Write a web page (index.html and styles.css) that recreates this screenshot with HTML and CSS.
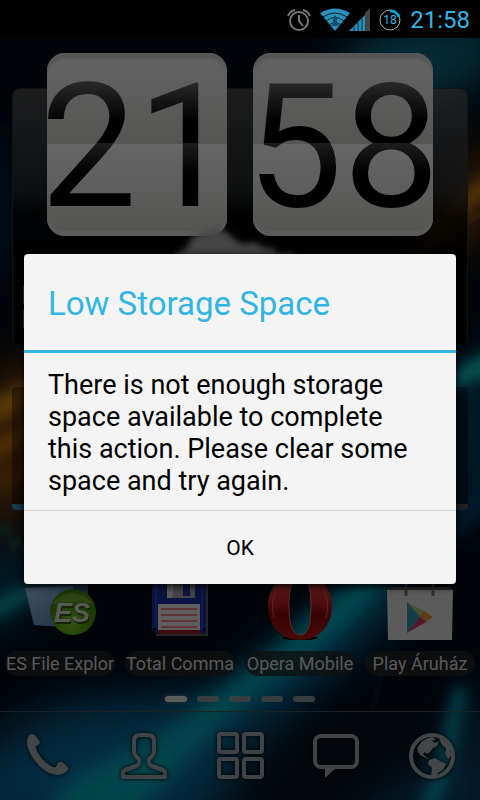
FILE: index.html
```html
<!DOCTYPE html>
<html lang="en">
<head>
  <meta charset="UTF-8">
  <meta name="viewport" content="width=device-width, initial-scale=1">
  <title>Low Storage Space</title>
  <link rel="stylesheet" href="styles.css">
</head>
<body>
  <div class="screen">
    <svg class="wallpaper" viewBox="0 0 480 800" preserveAspectRatio="xMidYMid slice" aria-hidden="true">
      <defs>
        <filter id="soft" x="-50%" y="-50%" width="200%" height="200%"><feGaussianBlur stdDeviation="7"/></filter>
        <filter id="beam" x="-50%" y="-50%" width="200%" height="200%"><feGaussianBlur stdDeviation="11"/></filter>
        <filter id="wide" x="-50%" y="-50%" width="200%" height="200%"><feGaussianBlur stdDeviation="22"/></filter>
        <filter id="thin" x="-50%" y="-50%" width="200%" height="200%"><feGaussianBlur stdDeviation="2"/></filter>
      </defs>
      <rect width="480" height="800" fill="#000a14"/>
      <g filter="url(#wide)">
        <path d="M320 90 L380 20 L500 20 L500 70 L400 120 Z" fill="#107088"/>
        <path d="M-30 120 L40 180 L20 270 L-30 280 Z" fill="#002038"/>
        <path d="M-30 390 L70 340 L90 470 L-30 540 Z" fill="#7a440c"/>
        <path d="M500 130 L400 230 L420 270 L500 220 Z" fill="#7a4408"/>
        <path d="M-30 830 L-30 760 L60 705 L220 690 L390 570 L410 600 L260 735 L200 830 Z" fill="#0070a8"/>
        <path d="M500 340 L440 370 L440 540 L500 480 Z" fill="#004868"/>
        <path d="M340 830 L440 760 L480 660 L500 830 Z" fill="#004a70"/>
        <path d="M-20 560 L40 540 L30 620 L-20 640 Z" fill="#00506a"/>
      </g>
      <path filter="url(#beam)" d="M40 820 L70 780 L170 730 L270 655 L330 600 L365 575 L395 578 L330 640 L240 705 L190 755 L130 820 Z" fill="#00c0d0"/>
      <g filter="url(#soft)">
        <path d="M418 810 L438 755 L456 685 L466 690 L456 755 L438 810 Z" fill="#00a8c8"/>
        <path d="M500 345 L450 372 L440 392 L500 372 Z" fill="#18c8d0"/>
        <path d="M-10 602 L60 572 L60 582 L-10 622 Z" fill="#10aab4"/>
        <path d="M-10 402 L50 370 L100 352 L100 368 L40 402 L-10 424 Z" fill="#e09018"/>
        <path d="M-10 444 L40 418 L40 434 L-10 462 Z" fill="#c87810"/>
        <path d="M-10 482 L40 458 L40 466 L-10 492 Z" fill="#a06018"/>
        <path d="M500 165 L465 192 L420 238 L432 238 L500 184 Z" fill="#d08018"/>
        <path d="M490 465 L460 500 L430 560 L500 500 Z" fill="#003c64"/>
      </g>
      <g filter="url(#thin)" fill="none" stroke-width="3">
        <path d="M500 202 L410 256" stroke="#8a5818"/>
        <path d="M-5 520 l8 14 l4 -10 l6 26 l5 -12 l6 14" stroke="#1c5038"/>
        <path d="M0 725 L45 695 M10 770 Q90 705 200 706" stroke="#006088" stroke-width="1"/>
        <path d="M370 800 L460 770 M372 710 L392 640" stroke="#003858" stroke-width="2"/>
      </g>
    </svg>

    <header class="status-bar">
      <svg width="24" height="26" viewBox="0 0 24 26" role="img" aria-label="Alarm set">
        <g fill="none" stroke="#777" stroke-width="2">
          <circle cx="12" cy="14" r="9"/>
          <path d="M12 8v6l4 5M1 9Q3 4 8 3M23 9Q21 4 16 3"/>
        </g>
      </svg>
      <svg width="50" height="24" viewBox="0 0 50 24" role="img" aria-label="Wi-Fi and mobile signal">
        <path d="M0 5Q15-4 30 5L15 23Z" fill="#2b90bb"/>
        <path d="M3 9Q15 1 27 9M6 13Q15 6 24 13M9 17Q15 12 21 17" fill="none" stroke="#04202c" stroke-width="1"/>
        <path d="M13 10l2-3l2 3v5l2 3h-8l2-3z" fill="#10506c"/>
        <path d="M29 23L45 7V23Z" fill="#2b90bb"/>
        <path d="M45 5L50 0V23H45Z" fill="#444"/>
        <path d="M34 17v6M38 14v9M42 10v13" stroke="#0a3040" stroke-width="1"/>
      </svg>
      <svg width="22" height="22" viewBox="0 0 22 22" role="img" aria-label="Battery 18 percent">
        <circle cx="11" cy="11" r="10" fill="none" stroke="#aaa" stroke-width="1"/>
        <path d="M11 2A9 9 0 0 1 20 8" fill="none" stroke="#0f9bd0" stroke-width="3"/>
        <text class="battery-text" x="11" y="15" text-anchor="middle">18</text>
      </svg>
      <time class="status-time">21:58</time>
    </header>

    <main class="home">
      <section class="clock-widget" aria-label="Clock and weather">
        <div class="flip-clock">
          <div class="flip"><span class="digits">21</span></div>
          <div class="flip"><span class="digits">58</span></div>
        </div>
        <svg class="cloud" width="150" height="46" viewBox="0 0 150 46" aria-hidden="true">
          <defs><filter id="puff"><feGaussianBlur stdDeviation="3"/></filter></defs>
          <path filter="url(#puff)" d="M6 46Q8 32 22 29Q24 14 42 12Q54 4 66 16Q74 24 80 24Q92 20 98 28Q108 26 112 34Q128 32 134 38L112 46Z" fill="#aaa"/>
        </svg>
        <div class="forecast"><i></i><i></i></div>
      </section>

      <section class="feed-widget" aria-label="Feed"></section>

      <nav class="apps" aria-label="Apps">
        <a class="app" href="#es">
          <svg width="72" height="72" viewBox="0 0 72 72" aria-hidden="true">
            <defs>
              <linearGradient id="folder" x2="1" y2="1"><stop offset="0" stop-color="#a8c8e8"/><stop offset="1" stop-color="#3c78b8"/></linearGradient>
              <radialGradient id="ball" cx=".45" cy=".75"><stop offset="0" stop-color="#78d020"/><stop offset="1" stop-color="#4c8c10"/></radialGradient>
            </defs>
            <path d="M12 8h52v50H18z" fill="#38668c"/>
            <path d="M1 20L49 18L56 60L10 57Z" fill="url(#folder)"/>
            <circle cx="49" cy="44" r="23" fill="url(#ball)"/>
            <path d="M28 36Q48 14 70 36Q48 32 28 36" fill="#a0c858" opacity=".5"/>
            <text class="es-mark" x="48" y="54" text-anchor="middle">ES</text>
          </svg>
          <span class="app-name">ES File Explor</span>
        </a>
        <a class="app" href="#total">
          <svg width="72" height="72" viewBox="0 0 72 72" aria-hidden="true">
            <path d="M12 10H64V68H12Z" fill="#605c58"/>
            <path d="M8 10H62V66H12L8 62Z" fill="#1832a8"/>
            <path d="M12 10V62M58 10V62" stroke="#3858d0" stroke-width="1"/>
            <path d="M23 8H51V30H23Z" fill="#aaa"/>
            <path d="M23 8H31L28 30H23Z" fill="#e0e0e0"/>
            <path d="M39 8H46V28H39Z" fill="#1832a8"/>
            <path d="M14 36H56V63H14Z" fill="#f0ece8"/>
            <path d="M17 41H53M17 47H53M17 53H53M17 59H53" stroke="#e02020" stroke-width="1"/>
            <path d="M14 62H56V66H14Z" fill="#9c2020"/>
            <path d="M9 60h3v3H9zM59 60h3v3h-3z" fill="#000830"/>
          </svg>
          <span class="app-name">Total Comma</span>
        </a>
        <a class="app" href="#opera">
          <svg width="72" height="72" viewBox="0 0 72 72" aria-hidden="true">
            <defs><linearGradient id="opera" x2="0" y2="1"><stop offset="0" stop-color="#f05050"/><stop offset=".45" stop-color="#c02020"/><stop offset=".6" stop-color="#8c0808"/><stop offset="1" stop-color="#b81818"/></linearGradient></defs>
            <ellipse cx="36" cy="70" rx="18" ry="2" fill="#000"/>
            <path fill-rule="evenodd" fill="url(#opera)" d="M36 6C56 6 68 20 68 38S56 72 36 72S4 56 4 38S16 6 36 6ZM36 11C27 11 25 24 25 38S27 67 36 67S47 54 47 38S45 11 36 11Z"/>
            <path d="M36 11C27 11 25 24 25 38S27 67 36 67S47 54 47 38S45 11 36 11Z" fill="none" stroke="#e07860" stroke-width="1"/>
            <path d="M12 22Q6 34 10 50M60 22Q66 34 62 50" fill="none" stroke="#d86060" stroke-width="1"/>
          </svg>
          <span class="app-name">Opera Mobile</span>
        </a>
        <a class="app" href="#play">
          <svg width="72" height="72" viewBox="0 0 72 72" aria-hidden="true">
            <path d="M3 22L7 19H65L69 22Z" fill="#606060"/>
            <path d="M3 22H69L68 72H4Z" fill="#e4e4e4"/>
            <path d="M22 28V14Q22 8 27 8H44Q49 8 49 14V28" fill="none" stroke="#777" stroke-width="3"/>
            <path d="M23 34V65L40 49Z" fill="#3c98b8"/>
            <path d="M23 34L42 44L37 50Z" fill="#b4c870"/>
            <path d="M40 43L49 49L41 54L36 49Z" fill="#e8983c"/>
            <path d="M23 65L36 49L42 54Z" fill="#d03c60"/>
          </svg>
          <span class="app-name">Play Áruház</span>
        </a>
      </nav>

      <div class="pages" aria-hidden="true">
        <span class="page current"></span>
        <span class="page"></span>
        <span class="page"></span>
        <span class="page"></span>
        <span class="page"></span>
      </div>
    </main>

    <nav class="dock" aria-label="Dock">
      <a href="#phone" aria-label="Phone">
        <svg width="48" height="48" viewBox="0 0 48 48">
          <path d="M5 3Q8 1 11 3L16 10Q16 12 12 14Q11 16 14 21Q20 31 29 35Q32 36 33 33Q34 29 38 30L43 34Q45 37 43 39Q39 43 32 43Q20 41 11 29Q3 18 3 11Q3 6 5 3Z"/>
        </svg>
      </a>
      <a href="#contacts" aria-label="Contacts">
        <svg class="line" width="48" height="48" viewBox="0 0 48 48">
          <path d="M20 3H28Q34 3 34 9V20Q34 23 29 27V30Q29 33 32 34L43 38Q45 39 45 41V45H3V41Q3 39 5 38L16 34Q19 33 19 30V27Q14 23 14 20V9Q14 3 20 3Z"/>
        </svg>
      </a>
      <a href="#all" aria-label="All apps">
        <svg class="line" width="48" height="48" viewBox="0 0 48 48">
          <rect x="3" y="2" width="18" height="18" rx="2"/>
          <rect x="28" y="2" width="18" height="18" rx="2"/>
          <rect x="3" y="27" width="18" height="18" rx="2"/>
          <rect x="28" y="27" width="18" height="18" rx="2"/>
        </svg>
      </a>
      <a href="#messages" aria-label="Messages">
        <svg class="line" width="48" height="48" viewBox="0 0 48 48">
          <rect x="3" y="4" width="42" height="31" rx="6"/>
          <path class="solid" d="M13 36H24L13 46Z"/>
        </svg>
      </a>
      <a href="#browser" aria-label="Browser">
        <svg width="48" height="48" viewBox="0 0 48 48">
          <circle class="ring" cx="24" cy="24" r="21"/>
          <path d="M9 16L14 9L20 6L24 5L28 7L24 9L27 11L31 9L29 14L25 16L22 20L19 22L17 20L15 22L18 25L21 28L16 25L12 23L10 20Z"/>
          <path d="M21 28L27 26L34 30L38 32L35 38L30 41L26 46L23 44L24 36L20 32Z"/>
          <path d="M33 7L38 10L42 16L43 24L40 27L37 22L38 16L34 13L31 7Z"/>
        </svg>
      </a>
    </nav>

    <div class="overlay">
      <div class="dialog" role="alertdialog" aria-labelledby="dialogTitle" aria-describedby="dialogText">
        <h1 id="dialogTitle">Low Storage Space</h1>
        <p id="dialogText">There is not enough storage space available to complete this action. Please clear some space and try again.</p>
        <button type="button">OK</button>
      </div>
    </div>
  </div>
</body>
</html>
```

FILE: styles.css
```css
* {
  box-sizing: border-box;
}
body {
  font-family: Roboto, Arial, sans-serif;
  background: #000;
  margin: 0;
}
.screen {
  position: relative;
  display: flex;
  flex-direction: column;
  min-height: 100vh;
  overflow: hidden;
  isolation: isolate;
}
.wallpaper {
  position: absolute;
  inset: 0;
  width: 100%;
  height: 100%;
  z-index: -1;
}

/* status bar */
.status-bar {
  display: flex;
  align-items: center;
  justify-content: flex-end;
  gap: 9px;
  height: 38px;
  padding: 2px 10px 0;
  background: #000;
}
.status-time {
  color: #33b5e5;
  font-size: 24px;
  line-height: 36px;
}
.battery-text {
  font-size: 12px;
  fill: #33b5e5;
}

/* home screen */
.home {
  flex: 1;
  display: flex;
  flex-direction: column;
}
.clock-widget {
  height: 256px;
  margin: 50px 12px 0;
  border: 1px solid #333;
  border-bottom-color: #000;
  border-radius: 8px;
  background: linear-gradient(rgba(90, 90, 90, 0.8), rgba(40, 44, 48, 0.8) 40%, rgba(0, 0, 0, 0.8) 50%, rgba(0, 0, 0, 0.9));
}
.flip-clock {
  display: flex;
  justify-content: center;
  gap: 26px;
  margin-top: -36px;
}
.flip {
  display: flex;
  justify-content: center;
  width: 180px;
  height: 183px;
  border-radius: 18px;
  background: linear-gradient(#f8f8f8, #d4d4d0 50%, #fff 50%, #d0d0cc);
  box-shadow: inset 0 7px 2px -1px #d8d8d8, inset 0 -6px 1px -1px #e4e4e4;
}
.digits {
  font-size: 172px;
  line-height: 188px;
  color: transparent;
  background: linear-gradient(#808080 10%, #000 38%, #000 49%, #484848 49%, #000 66%);
  -webkit-background-clip: text;
  background-clip: text;
}
.cloud {
  display: block;
  margin: -16px auto 0;
}
.forecast {
  display: flex;
  flex-direction: column;
  gap: 6px;
  padding: 20px 10px;
}
.forecast i {
  width: 3px;
  height: 18px;
  background: #aaa;
}
.feed-widget {
  height: 123px;
  margin: 43px 12px 0;
  border-radius: 4px;
  background: linear-gradient(90deg, #3894b8 50%, #505458 50%) bottom / 100% 6px no-repeat, rgba(0, 0, 0, 0.4);
  overflow: hidden;
}

/* app shortcuts */
.apps {
  display: grid;
  grid-template-columns: repeat(4, 1fr);
  margin-top: auto;
}
.app {
  display: flex;
  flex-direction: column;
  align-items: center;
  gap: 11px;
  min-width: 0;
  padding: 0 5px;
  color: #ddd;
  text-decoration: none;
}
.app-name {
  width: 100%;
  height: 25px;
  border-radius: 13px;
  background: rgba(40, 40, 40, 0.8);
  font-size: 18px;
  line-height: 25px;
  text-align: center;
  white-space: nowrap;
}
.es-mark {
  font-family: "Liberation Sans", Arial, sans-serif;
  font-size: 27px;
  font-weight: bold;
  font-style: italic;
  fill: #ddd;
  filter: drop-shadow(1px 2px 0 #305808);
}
.pages {
  display: flex;
  justify-content: center;
  gap: 10px;
  padding: 20px 0 9px;
}
.page {
  width: 22px;
  height: 6px;
  border-radius: 3px;
  background: #889ca4;
}
.page.current {
  background: #e8e8e8;
  box-shadow: 0 0 4px #888;
}

/* dock */
.dock {
  display: grid;
  grid-template-columns: repeat(5, 1fr);
  align-items: center;
  justify-items: center;
  height: 89px;
  border-top: 1px solid #3c5560;
  background: rgba(60, 70, 80, 0.15);
}
.dock svg {
  display: block;
  fill: #a4acb0;
  filter: drop-shadow(0 0 2px #000);
}
.dock .line {
  fill: none;
  stroke: #a0a8ac;
  stroke-width: 4;
  stroke-linejoin: round;
}
.dock .solid {
  fill: #a0a8ac;
  stroke: none;
}
.dock .ring {
  fill: none;
  stroke: #a4acb0;
  stroke-width: 4;
}

/* dialog */
.overlay {
  position: absolute;
  inset: 38px 0 0;
  display: flex;
  align-items: center;
  justify-content: center;
  padding: 0 24px;
  background: rgba(0, 0, 0, 0.6);
}
.dialog {
  width: 100%;
  border-radius: 4px;
  background: #f4f4f4;
  box-shadow: 0 2px 8px #000;
  overflow: hidden;
}
.dialog h1 {
  margin: 0;
  padding: 4px 24px 0;
  border-bottom: 3px solid #33b5e5;
  color: #33b5e5;
  font-size: 33px;
  font-weight: 400;
  line-height: 92px;
}
.dialog p {
  margin: 0;
  padding: 16px 24px 13px;
  color: #000;
  font-size: 27px;
  line-height: 32px;
}
.dialog button {
  display: block;
  width: 100%;
  height: 74px;
  border: 0;
  border-top: 1px solid #d4d4d4;
  background: none;
  color: #000;
  font-family: inherit;
  font-size: 21px;
  cursor: pointer;
}
.dialog button:active {
  background: #33b5e5;
}
```
